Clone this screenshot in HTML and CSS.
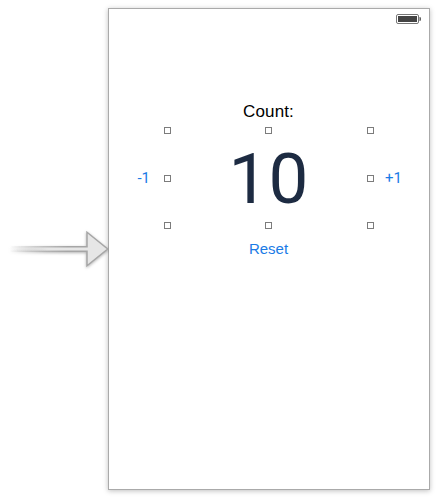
FILE: index.html
```html
<!DOCTYPE html>
<html lang="en">
<head>
<meta charset="utf-8">
<title>Counter</title>
<link rel="stylesheet" href="styles.css">
</head>
<body>
<main class="canvas">
  <svg class="entry-arrow" width="109" height="50" viewBox="0 0 109 50" aria-hidden="true">
    <defs>
      <linearGradient id="edge" gradientUnits="userSpaceOnUse" x1="9" y1="0" x2="87" y2="0">
        <stop offset="0" stop-color="#a6a6a6" stop-opacity="0"/>
        <stop offset=".75" stop-color="#a6a6a6"/>
      </linearGradient>
      <linearGradient id="fill" gradientUnits="userSpaceOnUse" x1="9" y1="0" x2="87" y2="0">
        <stop offset="0" stop-color="#e6e6e6" stop-opacity="0"/>
        <stop offset=".5" stop-color="#e6e6e6"/>
      </linearGradient>
    </defs>
    <path class="arrow-shape" d="M9 22.7H87V8.2L107.7 25L87 41.8V27.3H9" fill="url(#fill)" stroke="url(#edge)" stroke-width="1.5"/>
  </svg>
  <section class="screen">
    <header class="status">
      <svg width="27" height="12" viewBox="0 0 27 12" aria-hidden="true">
        <rect x=".5" y="1.5" width="22" height="9" rx="1.5" fill="#fff" stroke="#777"/>
        <rect x="2" y="3" width="19" height="6" fill="#444"/>
        <path d="M23.5 4h.5q1 0 1 2t-1 2h-.5z" fill="#555"/>
      </svg>
    </header>
    <div class="label">Count:</div>
    <div class="counter">
      <button class="step minus">-1</button>
      <div class="selection">
        <i></i><i></i><i></i>
        <i></i><output class="value">10</output><i></i>
        <i></i><i></i><i></i>
      </div>
      <button class="step plus">+1</button>
    </div>
    <button class="reset">Reset</button>
  </section>
</main>
</body>
</html>
```
FILE: styles.css
```css
* {
  box-sizing: border-box;
}

body {
  margin: 0;
  background: #fff;
  font-family: "Liberation Sans", Arial, sans-serif;
}

.canvas {
  display: flex;
  width: 438px;
  height: 501px;
  padding-top: 8px;
  overflow: hidden;
}

.entry-arrow {
  position: relative;
  z-index: 1;
  flex: none;
  margin: 216px -1px 0 0;
}

.arrow-shape {
  filter: drop-shadow(0 1.5px 1.5px rgba(0, 0, 0, .3));
}

.screen {
  display: flex;
  flex-direction: column;
  align-items: center;
  width: 322px;
  height: 482px;
  border: 1px solid #aaa;
  background: #fff;
  box-shadow: 0 1px 5px rgba(0, 0, 0, .25);
}

.status {
  display: flex;
  justify-content: flex-end;
  width: 100%;
  height: 93px;
  padding: 4px 6px 0 0;
}

.label {
  height: 25px;
  padding-right: 1px;
  font-size: 17px;
  line-height: 20px;
  letter-spacing: .15px;
  color: #000;
}

.counter {
  display: grid;
  grid-template-columns: 55px 210px 55px;
  align-items: center;
  height: 102px;
}

button {
  padding: 0;
  border: 0;
  background: none;
  color: #1a7be6;
  font: 15px/18px "Liberation Sans", Arial, sans-serif;
}

.step {
  font-family: Roboto, sans-serif;
}

.minus {
  padding-right: 14px;
  text-align: right;
}

.plus {
  padding-left: 11px;
  text-align: left;
}

.selection {
  display: grid;
  grid-template-columns: 7px 195px 8px;
  grid-template-rows: 7px 1fr 7px;
  align-items: center;
  justify-items: center;
  height: 102px;
}

.selection i {
  width: 7px;
  height: 7px;
  border: 1px solid #7c7c7c;
  background: #fff;
}

.selection i:nth-of-type(3n + 2),
.selection i:nth-of-type(5) {
  justify-self: center;
}

.selection i:nth-of-type(3),
.selection i:nth-of-type(5),
.selection i:nth-of-type(8) {
  justify-self: end;
}

.selection i:nth-of-type(7) {
  justify-self: center;
}

.value {
  padding-top: 2px;
  color: #1d2b42;
  font: 71px/84px Roboto, sans-serif;
}

.reset {
  margin-top: 11px;
  padding-right: 1px;
}
```
